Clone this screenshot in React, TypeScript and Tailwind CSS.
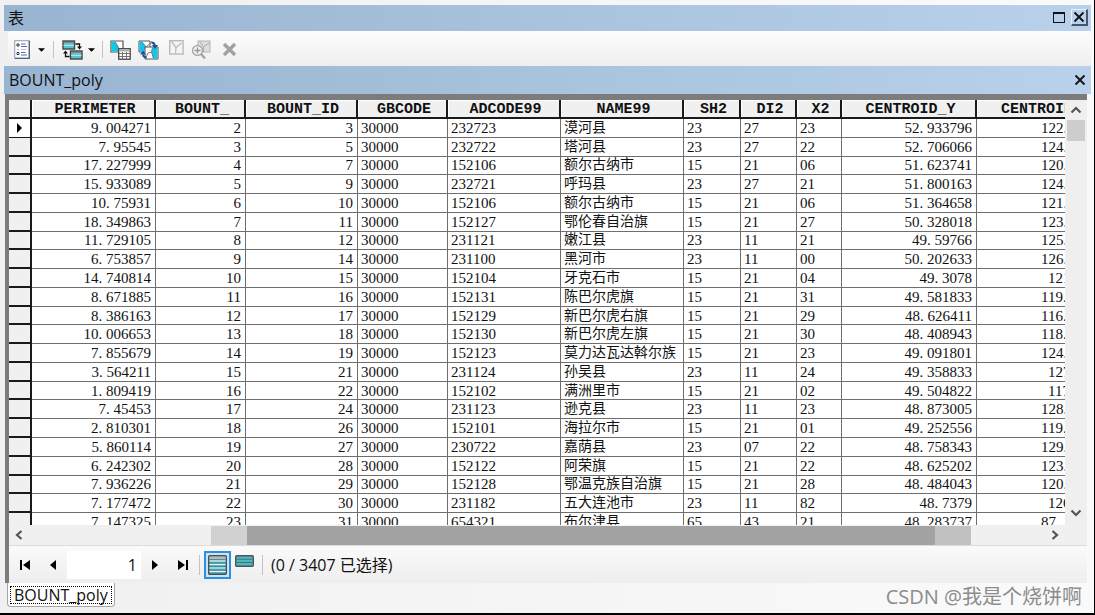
import { useState } from "react";

type Column = {
  name: string;
  className: string;
  align: "left" | "right";
};

const columns: Column[] = [
  { name: "PERIMETER", className: "w-[124px]", align: "right" },
  { name: "BOUNT_", className: "w-[90px]", align: "right" },
  { name: "BOUNT_ID", className: "w-[112px]", align: "right" },
  { name: "GBCODE", className: "w-[90px]", align: "left" },
  { name: "ADCODE99", className: "w-[113px]", align: "left" },
  { name: "NAME99", className: "w-[123px]", align: "left" },
  { name: "SH2", className: "w-[57px]", align: "left" },
  { name: "DI2", className: "w-[56px]", align: "left" },
  { name: "X2", className: "w-[45px]", align: "left" },
  { name: "CENTROID_Y", className: "w-[135px]", align: "right" },
  { name: "CENTROID_X", className: "w-[136px]", align: "left" },
];

const rows: string[][] = [
  ["9. 004271", "2", "3", "30000", "232723", "漠河县", "23", "27", "23", "52. 933796", "122."],
  ["7. 95545", "3", "5", "30000", "232722", "塔河县", "23", "27", "22", "52. 706066", "124."],
  ["17. 227999", "4", "7", "30000", "152106", "额尔古纳市", "15", "21", "06", "51. 623741", "120."],
  ["15. 933089", "5", "9", "30000", "232721", "呼玛县", "23", "27", "21", "51. 800163", "124."],
  ["10. 75931", "6", "10", "30000", "152106", "额尔古纳市", "15", "21", "06", "51. 364658", "121."],
  ["18. 349863", "7", "11", "30000", "152127", "鄂伦春自治旗", "15", "21", "27", "50. 328018", "123."],
  ["11. 729105", "8", "12", "30000", "231121", "嫩江县", "23", "11", "21", "49. 59766", "125."],
  ["6. 753857", "9", "14", "30000", "231100", "黑河市", "23", "11", "00", "50. 202633", "126."],
  ["14. 740814", "10", "15", "30000", "152104", "牙克石市", "15", "21", "04", "49. 3078", "121"],
  ["8. 671885", "11", "16", "30000", "152131", "陈巴尔虎旗", "15", "21", "31", "49. 581833", "119."],
  ["8. 386163", "12", "17", "30000", "152129", "新巴尔虎右旗", "15", "21", "29", "48. 626411", "116."],
  ["10. 006653", "13", "18", "30000", "152130", "新巴尔虎左旗", "15", "21", "30", "48. 408943", "118."],
  ["7. 855679", "14", "19", "30000", "152123", "莫力达瓦达斡尔族", "15", "21", "23", "49. 091801", "124."],
  ["3. 564211", "15", "21", "30000", "231124", "孙吴县", "23", "11", "24", "49. 358833", "127"],
  ["1. 809419", "16", "22", "30000", "152102", "满洲里市", "15", "21", "02", "49. 504822", "117"],
  ["7. 45453", "17", "24", "30000", "231123", "逊克县", "23", "11", "23", "48. 873005", "128."],
  ["2. 810301", "18", "26", "30000", "152101", "海拉尔市", "15", "21", "01", "49. 252556", "119."],
  ["5. 860114", "19", "27", "30000", "230722", "嘉荫县", "23", "07", "22", "48. 758343", "129."],
  ["6. 242302", "20", "28", "30000", "152122", "阿荣旗", "15", "21", "22", "48. 625202", "123."],
  ["7. 936226", "21", "29", "30000", "152128", "鄂温克族自治旗", "15", "21", "28", "48. 484043", "120."],
  ["7. 177472", "22", "30", "30000", "231182", "五大连池市", "23", "11", "82", "48. 7379", "126"],
  ["7. 147325", "23", "31", "30000", "654321", "布尔津县", "65", "43", "21", "48. 283737", "87. 1"],
];

function cellClass(column: number, value: string) {
  if (column === 10) {
    // shorter decimals start one digit further right
    return value.length === 3 ? "pl-[71px] text-left" : "pl-16 text-left";
  }
  return columns[column].align === "right"
    ? "pr-1 text-right"
    : "pl-[3px] text-left";
}

function CloseIcon() {
  return (
    <svg className="size-3" viewBox="0 0 12 12" aria-hidden="true">
      <path d="M1.5 1.5 10.5 10.5M10.5 1.5 1.5 10.5" stroke="#111" strokeWidth="1.8" />
    </svg>
  );
}

function DropArrow() {
  return (
    <svg className="h-1 w-[7px]" viewBox="0 0 8 4" aria-hidden="true">
      <path d="M0 0h8L4 4z" fill="#000" />
    </svg>
  );
}

function Divider({ className }: { className?: string }) {
  return <div className={`w-px bg-[#c3c3c3] ${className}`} />;
}

function Chevron({ d }: { d: string }) {
  return (
    <svg className="size-3" viewBox="0 0 12 12" aria-hidden="true">
      <path d={d} fill="none" stroke="#555" strokeWidth="2.2" />
    </svg>
  );
}

function TableOptionsIcon() {
  return (
    <svg className="h-[19px] w-4" viewBox="0 0 16 19" aria-hidden="true">
      <rect x="0.7" y="0.7" width="14.6" height="17.6" fill="#fbfcff" stroke="#8f9db5" />
      <path d="M15.3 1v17.3H1" fill="none" stroke="#53637c" strokeWidth="1.3" />
      <circle cx="4" cy="5" r="1.2" fill="#fff" stroke="#222" />
      <circle cx="4" cy="13.5" r="1.2" fill="#fff" stroke="#222" />
      <path d="M7 4h4.500M7 6.500h6M7 12.500h4.500M7 15h6" stroke="#5c6f9b" />
      <path d="M3 9.500h2M7 9.500h5" stroke="#b5bfd1" />
    </svg>
  );
}

function RelatedTablesIcon() {
  return (
    <svg className="h-5 w-[21px]" viewBox="0 0 21 20" aria-hidden="true">
      <rect x="1" y="1" width="11.5" height="8" fill="#59c3cf" stroke="#444" strokeWidth="1.4" />
      <path d="M1.500 2.500h10.500" stroke="#888" />
      <path d="M1.500 5.300h10.500" stroke="#b9eef2" />
      <rect x="8.500" y="11" width="11.500" height="8" fill="#59c3cf" stroke="#444" strokeWidth="1.400" />
      <path d="M9 12.500h10.500" stroke="#888" />
      <path d="M9 15.300h10.500" stroke="#b9eef2" />
      <path d="M13.500 4h4V7M7.500 16.500h-4V13" fill="none" stroke="#111" strokeWidth="1.300" />
      <path d="M15 6.500h5l-2.500 3zM1 13.500h5l-2.500-3z" fill="#111" />
    </svg>
  );
}

function SelectByAttributesIcon() {
  return (
    <svg className="h-5 w-[21px]" viewBox="0 0 21 20" aria-hidden="true">
      <path d="M1 1h12v11H1z" fill="#fff" stroke="#555" strokeWidth="1.2" />
      <path d="M1.600 1.600h3.400l3 5 .5 4.900H1.600z" fill="#0fc8ee" />
      <path d="M5 1.600 8 6.600 8.500 11.500" fill="none" stroke="#777" />
      <rect x="8.700" y="8.700" width="11.500" height="10.500" fill="#fff" stroke="#444" strokeWidth="1.300" />
      <path d="M9.500 10.500h10" stroke="#aaa" strokeWidth="2" />
      <path d="M9 13.500h11M9 16.500h11M12.500 12v7M16.500 12v7" stroke="#666" strokeWidth="0.900" />
    </svg>
  );
}

function SwitchSelectionIcon() {
  return (
    <svg className="h-5 w-[21px]" viewBox="0 0 21 20" aria-hidden="true">
      <path d="M1 1h11v11H1z" fill="#fff" stroke="#555" />
      <path d="M1.500 1.500h2.500l4 5-2 5H1.500z" fill="#0fc8ee" />
      <path d="M7 7h13v12H7z" fill="#fff" stroke="#555" />
      <path d="M14.500 7.500h5v11h-4L13.500 12z" fill="#0fc8ee" />
      <path d="M3.500 1.500 8 7l6-5.500" fill="none" stroke="#777" />
      <path d="M7.500 18.500 10 13l3.500-1 2 6.500M13.500 12l1-4.500" fill="none" stroke="#777" />
      <path d="M13.500 2.500q3 0 3.500 3.500M8.500 17.500q-3 0-3.500-3" fill="none" stroke="#1d4f9c" strokeWidth="1.900" />
      <path d="M14 5h6L17 9zM2 14.500h6L5 10.500z" fill="#1d4f9c" />
    </svg>
  );
}

function ClearSelectionIcon() {
  return (
    <svg className="size-[15px]" viewBox="0 0 15 15" aria-hidden="true">
      <rect x="0.700" y="0.700" width="13.400" height="13.400" fill="#f4f4f4" stroke="#b9b9b9" strokeWidth="1.400" />
      <path d="M2.500 1.500 7 7.500 6.500 13.500M7 7.500 12.500 3" fill="none" stroke="#bdbdbd" strokeWidth="1.300" />
    </svg>
  );
}

function ZoomSelectedIcon() {
  return (
    <svg className="h-5 w-5" viewBox="0 0 20 20" aria-hidden="true">
      <rect x="7" y="1" width="12" height="11" fill="#dedede" stroke="#b5b5b5" />
      <path d="m8.500 1.500 4 5 6-3.500M12.500 6.500v5.500" fill="none" stroke="#aaa" />
      <circle cx="6.500" cy="10.500" r="5" fill="#f1f1f1" stroke="#aaa" strokeWidth="1.400" />
      <path d="M3.500 10.500h6M6.500 7.500v6" stroke="#999" strokeWidth="1.300" />
      <path d="m10 14 4 4.500" stroke="#a5a5a5" strokeWidth="2.400" />
    </svg>
  );
}

function DeleteIcon() {
  return (
    <svg className="size-[15px]" viewBox="0 0 15 15" aria-hidden="true">
      <path d="M2 2 13 13M13 2 2 13" stroke="#a2a2a2" strokeWidth="3.400" />
    </svg>
  );
}

function TitleBar() {
  return (
    <header className="flex h-[26px] shrink-0 items-center bg-linear-to-r from-[#99b4d1] to-[#b9d1ea] pr-[3px] pl-1">
      <h1 className="text-[16px] leading-6">表</h1>
      <button type="button" aria-label="Maximize" className="mr-1 mb-0.5 ml-auto flex size-4 items-center justify-center">
        <span className="h-[11px] w-3 border border-t-2 border-[#111]" />
      </button>
      <button
        type="button"
        aria-label="Close"
        className="mb-0.5 flex size-[17px] items-center justify-center border-t border-r-2 border-b-2 border-l border-t-[#e8f1fa] border-r-[#47586b] border-b-[#47586b] border-l-[#e8f1fa]"
      >
        <CloseIcon />
      </button>
    </header>
  );
}

function Toolbar() {
  return (
    <div className="ml-1 flex h-[35px] shrink-0 items-center rounded-l bg-linear-to-b from-[#fdfdfd] to-[#eeeeee] pt-0.5 pl-1.5">
      <button type="button" aria-label="Table options" className="flex items-center gap-2">
        <TableOptionsIcon />
        <DropArrow />
      </button>
      <Divider className="mx-2 h-[17px]" />
      <button type="button" aria-label="Related tables" className="flex items-center gap-[5px]">
        <RelatedTablesIcon />
        <DropArrow />
      </button>
      <Divider className="mx-[7px] h-[17px]" />
      <div className="flex items-center gap-[7px]">
        <button type="button" aria-label="Select by attributes">
          <SelectByAttributesIcon />
        </button>
        <button type="button" aria-label="Switch selection">
          <SwitchSelectionIcon />
        </button>
        <button type="button" aria-label="Clear selection" disabled className="mb-1 ml-[3px]">
          <ClearSelectionIcon />
        </button>
        <button type="button" aria-label="Zoom to selected" disabled>
          <ZoomSelectedIcon />
        </button>
        <button type="button" aria-label="Delete selected" disabled className="ml-1">
          <DeleteIcon />
        </button>
      </div>
    </div>
  );
}

function AttributeTable({ current }: { current: number }) {
  return (
    <div className="min-w-0 flex-1 overflow-hidden bg-white">
      <table className="h-[432px] w-[1104px] table-fixed border-separate border-spacing-0 font-['Liberation_Serif','Noto_Sans_CJK_SC',serif] text-[15px] leading-4">
        <thead>
          <tr className="h-[19px] font-['Liberation_Mono',monospace] leading-[15px]">
            <th className="w-[23px] border-r-2 border-b-2 border-[#1a1a1a] bg-[#f0f0f0] p-0" />
            {columns.map((column) => (
              <th
                key={column.name}
                className={`border-r-2 border-b-2 border-[#1a1a1a] bg-[#f0f0f0] pt-0.5 pr-0 pb-0 pl-1 text-center font-bold shadow-[inset_1px_1px_0_#fff] ${column.className}`}
              >
                {column.name}
              </th>
            ))}
          </tr>
        </thead>
        <tbody>
          {rows.map((row, index) => (
            <tr key={row[1]}>
              <td
                className={`border-r-2 border-[#1a1a1a] p-0 ${index === current - 1 ? "border-b bg-white" : "border-b-2 bg-[#f0f0f0]"}`}
              >
                {index === current - 1 && (
                  <svg className="mx-auto h-2.5 w-[5px]" viewBox="0 0 5 10" aria-hidden="true">
                    <path d="M0 0v10l5-5z" fill="#000" />
                  </svg>
                )}
              </td>
              {row.map((value, column) => (
                <td
                  key={columns[column].name}
                  className={`border-r border-b border-[#6e6e6e] py-0 whitespace-nowrap ${column === 5 ? "text-[14px]" : ""} ${cellClass(column, value)}`}
                >
                  {value}
                </td>
              ))}
            </tr>
          ))}
        </tbody>
      </table>
    </div>
  );
}

function VerticalScroll() {
  return (
    <div className="flex w-[22px] shrink-0 flex-col items-center bg-[#efefef]">
      <button type="button" aria-label="Scroll up" className="flex h-5 items-center">
        <Chevron d="M1.500 8.500 6 4l4.500 4.500" />
      </button>
      <div className="h-[21px] w-[18px] bg-[#cdcdcd]" />
      <button type="button" aria-label="Scroll down" className="mt-auto flex h-6 items-center">
        <Chevron d="M1.500 3.500 6 8l4.500-4.500" />
      </button>
    </div>
  );
}

function HorizontalScroll() {
  return (
    <div className="flex h-5 shrink-0 items-center bg-[#f0f0f0]">
      <button type="button" aria-label="Scroll left" className="w-[202px] pl-1">
        <Chevron d="M8.500 2 4 6l4.500 4" />
      </button>
      <div className="h-[19px] w-9 bg-[#d1d1d1]" />
      <div className="h-[19px] flex-1 bg-[#a3a3a3]" />
      <div className="h-[19px] w-9 bg-[#c1c1c1]" />
      <button type="button" aria-label="Scroll right" className="flex w-[116px] justify-end pr-[26px]">
        <Chevron d="M3.500 2 8 6l-4.500 4" />
      </button>
    </div>
  );
}

function RecordButton({
  label,
  d,
  onClick,
}: {
  label: string;
  d: string;
  onClick: () => void;
}) {
  return (
    <button type="button" aria-label={label} onClick={onClick} className="flex w-7 justify-center">
      <svg className="h-3 w-3" viewBox="0 0 12 12" aria-hidden="true">
        <path d={d} fill="#000" />
      </svg>
    </button>
  );
}

function RecordBar({
  current,
  onChange,
}: {
  current: number;
  onChange: (record: number) => void;
}) {
  const total = 3407;
  const [showAll, setShowAll] = useState<boolean>(true);

  return (
    <div className="flex h-[38px] shrink-0 items-center border-t border-[#dcdcdc] bg-linear-to-b from-[#fafafa] to-[#eeeeee] pl-0.5">
      <RecordButton label="First" d="M1 1h2v10H1zM11 1v10L4 6z" onClick={() => onChange(1)} />
      <RecordButton label="Previous" d="M9 1v10L3 6z" onClick={() => onChange(Math.max(1, current - 1))} />
      <input
        className="h-7 w-[74px] bg-white pr-1 text-right"
        aria-label="Record"
        value={current}
        onChange={(e) => onChange(Number(e.currentTarget.value) || 1)}
      />
      <RecordButton label="Next" d="M3 1v10l6-5z" onClick={() => onChange(Math.min(total, current + 1))} />
      <RecordButton label="Last" d="M9 1h2v10H9zM1 1v10l7-5z" onClick={() => onChange(total)} />
      <Divider className="mr-1 ml-0.5 h-5" />
      <button
        type="button"
        aria-label="Show all records"
        aria-pressed={showAll}
        onClick={() => setShowAll(true)}
        className="flex h-7 w-[27px] items-center justify-center border-2 border-[#2f8fdf] bg-[#cbe3f7]"
      >
        <svg className="h-5 w-[19px]" viewBox="0 0 19 20" aria-hidden="true">
          <rect x="0.700" y="0.700" width="17.600" height="18.600" rx="1" fill="#58b5bf" stroke="#4a4f50" strokeWidth="1.400" />
          <path d="M1.400 3.500h16.200" stroke="#b9b9b9" strokeWidth="4" />
          <path d="M1.400 6h16.200M1.400 9.500h16.200M1.400 13h16.200M1.400 16.500h16.200" stroke="#e4f6f7" />
          <path d="M1.400 4.500h16.200M1.400 8h16.200M1.400 11.500h16.200M1.400 15h16.200" stroke="#3f7f86" strokeWidth="0.800" />
        </svg>
      </button>
      <button
        type="button"
        aria-label="Show selected records"
        aria-pressed={!showAll}
        onClick={() => setShowAll(false)}
        className="mb-2 ml-1"
      >
        <svg className="h-3 w-[19px]" viewBox="0 0 19 12" aria-hidden="true">
          <rect x="0.700" y="0.700" width="17.600" height="10.600" rx="1" fill="#58b5bf" stroke="#46565a" strokeWidth="1.400" />
          <path d="M1.500 4.200h16M1.500 7.500h16" stroke="#33777f" />
        </svg>
      </button>
      <Divider className="mx-2 h-5" />
      <span className="whitespace-nowrap">(0 / 3407 已选择)</span>
    </div>
  );
}

function App() {
  const [current, setCurrent] = useState<number>(1);

  return (
    <main className="relative flex h-screen w-full flex-col overflow-hidden border-r border-b-2 border-black bg-linear-to-r from-[#f0f0f0] to-[#fafafa] pt-[5px] pr-[3px] pl-1 font-['Open_Sans','Noto_Sans_CJK_SC',sans-serif] text-[16px] leading-5 text-[#111]">
      <TitleBar />
      <Toolbar />
      <div className="flex h-[28px] shrink-0 items-center bg-linear-to-r from-[#99b4d1] to-[#b9d1ea] pr-[5px] pl-[5px]">
        <h2>BOUNT_poly</h2>
        <button type="button" aria-label="Close table" className="ml-auto">
          <CloseIcon />
        </button>
      </div>
      <section className="mr-1 ml-px flex min-h-0 flex-1 flex-col border-t-6 border-l-4 border-[#7c7c7c]">
        <div className="flex min-h-0 flex-1">
          <AttributeTable current={current} />
          <VerticalScroll />
        </div>
        <HorizontalScroll />
        <RecordBar current={current} onChange={setCurrent} />
      </section>
      <nav className="flex h-[30px] shrink-0 items-start pl-[3px]">
        <button
          type="button"
          className="rounded-b border border-t-0 border-[#a5a5a5] bg-white p-0.5 pt-[3px]"
        >
          <span className="block border border-dotted border-black px-[3px] leading-4">
            BOUNT_poly
          </span>
        </button>
      </nav>
      <p className="absolute right-3 bottom-1 text-[20px] leading-6 text-[#8c8c8c]">
        CSDN @我是个烧饼啊
      </p>
    </main>
  );
}

export default App;
